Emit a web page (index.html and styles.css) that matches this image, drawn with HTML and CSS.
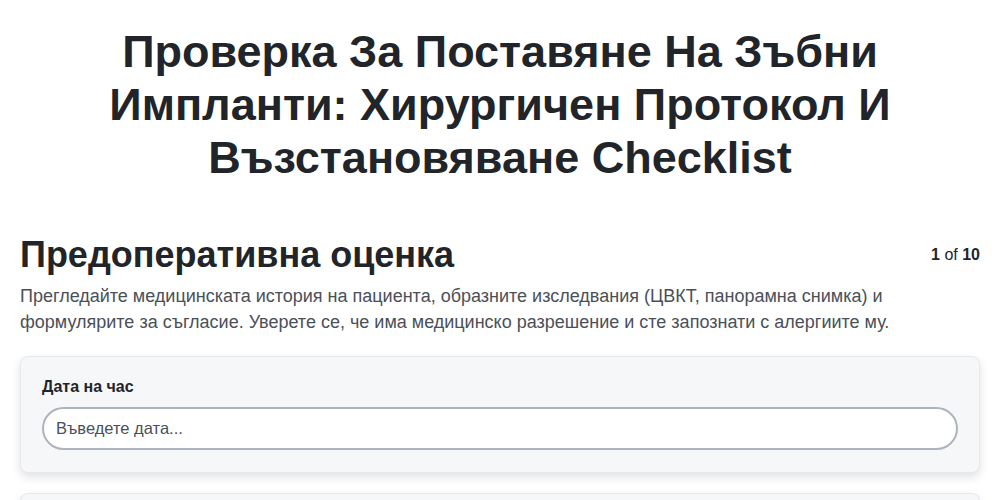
FILE: index.html
```html
<!DOCTYPE html>
<html lang="bg">
<head>
  <meta charset="UTF-8">
  <meta name="viewport" content="width=device-width, initial-scale=1.0">
  <title>Проверка За Поставяне На Зъбни Импланти</title>
  <link rel="stylesheet" href="styles.css">
</head>
<body>
  <main class="checklist">
    <h1 class="checklist-title">Проверка За Поставяне На Зъбни Импланти: Хирургичен Протокол И Възстановяване Checklist</h1>

    <section class="step">
      <div class="step-head">
        <h2>Предоперативна оценка</h2>
        <span class="step-count"><b>1</b> of <b>10</b></span>
      </div>
      <p class="step-desc">Прегледайте медицинската история на пациента, образните изследвания (ЦВКТ, панорамна снимка) и формулярите за съгласие. Уверете се, че има медицинско разрешение и сте запознати с алергиите му.</p>

      <div class="field-card">
        <label for="appt-date">Дата на час</label>
        <input type="text" id="appt-date" placeholder="Въведете дата...">
      </div>

      <div class="field-card">
        <label for="surgeon">Хирург</label>
        <input type="text" id="surgeon" placeholder="Въведете име...">
      </div>
    </section>
  </main>
</body>
</html>
```

FILE: styles.css
```css
body {
  font-family: 'Liberation Sans', Arial, sans-serif;
  margin: 0;
  padding: 0;
  background: #fff;
  color: #212529;
}
.checklist {
  padding: 0 20px;
}
.checklist-title {
  margin: 25px auto 0;
  max-width: 820px;
  text-align: center;
  font-size: 45px;
  line-height: 53px;
  font-weight: bold;
}
.step {
  margin-top: 50px;
}
.step-head {
  display: flex;
  justify-content: space-between;
  align-items: center;
}
.step-head h2 {
  margin: 0;
  font-size: 36px;
  line-height: 42px;
}
.step-count {
  font-size: 16px;
  color: #212529;
}
.step-desc {
  margin: 7px 0 21px;
  font-size: 18px;
  line-height: 26px;
  color: #4a5058;
}
.field-card {
  background: #f6f7f9;
  border: 1px solid #e6e8ec;
  border-radius: 8px;
  box-shadow: 0 4px 10px rgba(0, 0, 0, 0.12);
  padding: 20px 21px 22px;
  margin-bottom: 20px;
}
.field-card label {
  display: block;
  font-size: 16px;
  line-height: 20px;
  font-weight: bold;
  margin-bottom: 10px;
}
.field-card input {
  display: block;
  box-sizing: border-box;
  width: 100%;
  height: 43px;
  padding: 0 12px;
  border: 2px solid #adb4bc;
  border-radius: 22px;
  background: #fff;
  font-family: inherit;
  font-size: 16.5px;
  color: #212529;
}
.field-card input::placeholder {
  color: #4a5058;
}
```
